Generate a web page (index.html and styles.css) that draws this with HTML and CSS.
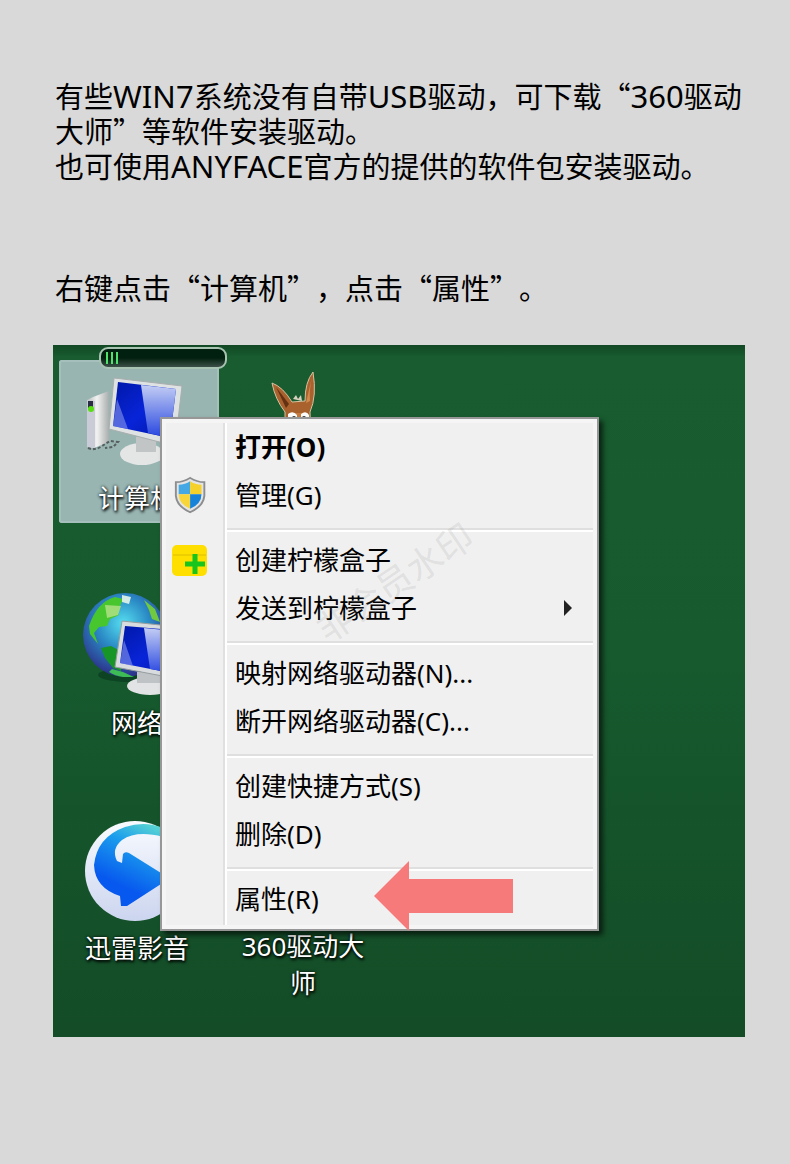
FILE: index.html
```
<!DOCTYPE html>
<html lang="zh-CN">

<head>
    <meta charset="UTF-8">
    <meta name="viewport" content="width=device-width, initial-scale=1.0">
    <title>USB驱动安装说明</title>
    <link rel="stylesheet" href="styles.css">
</head>

<body>
    <main class="page">
        <p class="intro">有些<span class="latin">WIN7</span>系统没有自带<span class="latin">USB</span>驱动，可下载“<span class="latin">360</span>驱动<br>大师”等软件安装驱动。<br>也可使用<span class="latin">ANYFACE</span>官方的提供的软件包安装驱动。</p>
        <p class="step">右键点击“计算机”，点击“属性”。</p>

        <div class="desktop">
            <!-- desktop icons -->
            <div class="icons">
                <div class="icon selected">
                    <svg viewBox="0 0 104 104" aria-hidden="true">
                        <defs>
                            <linearGradient id="screen" x1="0" y1="0" x2="1" y2="1">
                                <stop offset="0" stop-color="#0018a8" />
                                <stop offset=".5" stop-color="#0824d8" />
                                <stop offset="1" stop-color="#0014a0" />
                            </linearGradient>
                            <linearGradient id="glare" x1="0" y1="0" x2="0" y2="1">
                                <stop offset="0" stop-color="#c3cdf4" />
                                <stop offset="1" stop-color="#2544e0" />
                            </linearGradient>
                            <linearGradient id="metal" x1="0" y1="0" x2="1" y2="0">
                                <stop offset="0" stop-color="#b8bcbc" />
                                <stop offset=".45" stop-color="#f2f2f2" />
                                <stop offset="1" stop-color="#a9adad" />
                            </linearGradient>
                        </defs>
                        <path d="M2 28 8 25 24 19V70L9 76 2 75Z" fill="url(#metal)" />
                        <path d="M2 28 10 29V76L2 75Z" fill="#c9cbd6" />
                        <path d="M3 29h5v7H3z" fill="#2b2d42" />
                        <circle cx="6" cy="37" r="3" fill="#57df12" />
                        <path d="M3 76q7 3 14-2l8-5 8 1-5 5-8 1" fill="none" stroke="#555f5f" stroke-width="2" stroke-dasharray="3 2" />
                        <ellipse cx="57" cy="82" rx="22" ry="11" fill="#e4e5e5" />
                        <path d="M51 65h20v15H51z" fill="#c2c5c5" />
                        <path d="M29 6 97 14 90 74 24 57Z" fill="#dfe2e2" stroke="#a9aeae" />
                        <path d="M33 10 91 17 85 66 28 54Z" fill="url(#screen)" />
                        <path d="M56 13 91 17 85 66 63 61Z" fill="url(#glare)" />
                        <path d="M32 27 43 57 28 54Z" fill="#8796ea" opacity=".6" />
                    </svg>
                    <span class="name">计算机</span>
                </div>

                <div class="icon donkey">
                    <svg viewBox="0 0 104 104" aria-hidden="true">
                        <path d="M21 11 Q32 15 41 30 L54 29 Q54 10 62 0 Q66 24 59 40 L60 66H34V40Q24 27 21 11Z" fill="#a9622e" stroke="#d5c3a2" />
                        <path d="M25 15 38 32 35 36Z" fill="#653113" />
                        <path d="M61 5 Q58 18 59 29L55 31Z" fill="#d18a4d" />
                        <path d="M42 27l3-4 2 4 3-4 1 6z" fill="#d8d0bd" />
                        <path d="M38 41h19v22H38z" fill="#c77a3d" />
                        <path d="M37 42q5-4 9 1v11h-9zM50 42q5-4 8 1v11h-8z" fill="#fff" />
                        <circle cx="43" cy="46" r="2" fill="#333" />
                        <circle cx="53" cy="46" r="2" fill="#333" />
                    </svg>
                </div>

                <div class="icon network">
                    <svg viewBox="0 0 104 104" aria-hidden="true">
                        <defs>
                            <radialGradient id="globe" cx=".48" cy=".36" r=".62">
                                <stop offset="0" stop-color="#55def0" />
                                <stop offset=".5" stop-color="#2a89c4" />
                                <stop offset="1" stop-color="#2c348c" />
                            </radialGradient>
                        </defs>
                        <ellipse cx="45" cy="78" rx="32" ry="7" fill="#07351c" opacity=".6" />
                        <circle cx="40" cy="38" r="42" fill="url(#globe)" />
                        <path d="M4 29Q12 5 30 0L38 2 35 9 29 10 34 18 25 22 22 29 14 30 9 36 13 47 5 37Z" fill="#47c62d" />
                        <path d="M20 8 36 9 33 18 22 21Z" fill="#a0dc78" />
                        <path d="M37-2 46 0 44 7 37 5Z" fill="#d3ebe5" />
                        <path d="M16 51 26 49 37 55 36 74 28 71 20 61Z" fill="#179527" />
                        <path d="M59 3 70 12 75 25 67 22 64 13Z" fill="#70c93e" />
                        <path d="M27 72 38 75 49 80H38Q30 79 24 75Z" fill="#3dbb55" />
                        <ellipse cx="65" cy="89" rx="23" ry="9" fill="#e2e3e4" />
                        <path d="M52 75h24v11H52z" fill="#bfc3c5" />
                        <path d="M37 24 104 31V84L30 70Z" fill="#d9dcde" stroke="#969e9f" />
                        <path d="M40 29 100 34 96 78 35 66Z" fill="url(#screen)" />
                        <path d="M59 31 100 35V78L65 72Z" fill="url(#glare)" />
                        <path d="M39 43 48 69 35 66Z" fill="#8796ea" opacity=".6" />
                    </svg>
                    <span class="name">网络</span>
                </div>

                <div class="icon player">
                    <svg viewBox="0 0 104 104" aria-hidden="true">
                        <defs>
                            <linearGradient id="disc" x1="0" y1="0" x2="0" y2="1">
                                <stop offset="0" stop-color="#f8fbff" />
                                <stop offset="1" stop-color="#ccd5ef" />
                            </linearGradient>
                            <linearGradient id="swirl" x1=".8" y1="0" x2=".3" y2="1">
                                <stop offset="0" stop-color="#65e0cd" />
                                <stop offset=".35" stop-color="#1b9ded" />
                                <stop offset=".8" stop-color="#0758ee" />
                            </linearGradient>
                        </defs>
                        <circle cx="50" cy="49" r="50" fill="url(#disc)" />
                        <path d="M96 17Q70-5 40 5Q12 15 9 43Q10 66 35 74L36 84H42L76 62V51L44 31Q40 29 38 32L37 41L32 39Q26 27 37 18Q52 8 78 15Z" fill="url(#swirl)" />
                    </svg>
                    <span class="name">迅雷影音</span>
                </div>

                <div class="icon driver">
                    <span class="name">360驱动大师</span>
                </div>
            </div>

            <!-- floating monitor bar -->
            <div class="pill"><i></i><i></i><i></i></div>

            <!-- context menu -->
            <div class="menu">
                <button type="button" class="item default"><span class="text">打开(O)</span></button>
                <button type="button" class="item">
                    <svg class="glyph" viewBox="0 0 36 42" aria-hidden="true">
                        <g transform="translate(1 3) scale(.95 .86)">
                            <path d="M18 1Q25 6 33 6V22Q32 34 18 41Q4 34 3 22V6Q11 6 18 1Z" fill="#e4e4e4" stroke="#8b8d8f" stroke-width="2" />
                            <path d="M18 5V20H6V9Q13 9 18 5Z" fill="#43a8e4" />
                            <path d="M18 5Q23 9 30 9V20H18Z" fill="#f5d129" />
                            <path d="M6 20H18V37Q6 31 6 20Z" fill="#f8d63a" />
                            <path d="M18 20H30Q30 31 18 37Z" fill="#1682d8" />
                        </g>
                    </svg>
                    <span class="text">管理(G)</span>
                </button>
                <hr>
                <button type="button" class="item">
                    <svg class="glyph" viewBox="0 0 36 42" aria-hidden="true">
                        <rect x="0" y="6" width="35" height="31" rx="5" fill="#ffdf00" />
                        <path d="M1 16h33" stroke="#dcc000" />
                        <path d="M13 25h20M23 15v20" stroke="#17c51d" stroke-width="5" />
                    </svg>
                    <span class="text">创建柠檬盒子</span>
                </button>
                <button type="button" class="item">
                    <span class="text">发送到柠檬盒子</span>
                    <svg class="more" viewBox="0 0 10 16" aria-hidden="true"><path d="M1 0 9 8 1 16Z" fill="#222" /></svg>
                </button>
                <hr>
                <button type="button" class="item"><span class="text">映射网络驱动器(N)...</span></button>
                <button type="button" class="item"><span class="text">断开网络驱动器(C)...</span></button>
                <hr>
                <button type="button" class="item"><span class="text">创建快捷方式(S)</span></button>
                <button type="button" class="item"><span class="text">删除(D)</span></button>
                <hr>
                <button type="button" class="item"><span class="text">属性(R)</span></button>

                <svg class="pointer" viewBox="0 0 139 70" aria-hidden="true"><path d="M0 35 35 0V18H139V52H35V70Z" fill="#f67a7a" /></svg>
            </div>

            <span class="watermark">非会员水印</span>
        </div>
    </main>
</body>

</html>
```
FILE: styles.css
```
* {
    box-sizing: border-box;
}

body {
    margin: 0;
    background-color: #d9d9d9;
    color: #000;
    font-family: "Noto Sans", "Noto Sans CJK SC", sans-serif;
    text-spacing-trim: space-all;
}

.page {
    padding: 78px 45px 128px 53px;
}

.intro,
.step {
    margin: 0 0 0 2px;
    font-family: "Noto Sans CJK SC", sans-serif;
    font-size: 29px;
    line-height: 35px;
    white-space: nowrap;
}

.step {
    margin-top: 87px;
    margin-bottom: 40px;
}

/* Latin letters run a little larger than the Chinese text */
.latin {
    font-family: "Noto Sans", sans-serif;
    font-size: 31px;
    line-height: 1;
}

.desktop {
    position: relative;
    aspect-ratio: 1 / 1;
    padding: 15px 6px;
    overflow: hidden;
    background: linear-gradient(#124825, #185c2f 12px, #175a2e 45%, #134c27);
}

.icons {
    display: grid;
    grid-template-columns: 160px 160px;
    grid-auto-rows: 225px;
    column-gap: 6px;
    align-items: start;
}

.icon {
    display: flex;
    flex-direction: column;
    align-items: center;
    padding: 12px 14px 6px 10px;
    border-radius: 3px;
}

.icon svg {
    width: 104px;
    height: 104px;
    margin-bottom: 4px;
    overflow: visible;
}

.selected {
    background-color: #98b5b2;
    box-shadow: inset 0 0 0 2px #a5c0bc;
}

.network {
    grid-row: 2;
}

.player {
    grid-row: 3;
}

.driver {
    grid-area: 3 / 2;
    padding-top: 118px;
}

.name {
    color: #fff;
    font-size: 26px;
    line-height: 37px;
    text-align: center;
    text-shadow: 1px 2px 3px #000, 0 0 3px #000;
}

.pill {
    position: absolute;
    top: 2px;
    left: 46px;
    display: flex;
    gap: 3px;
    width: 128px;
    height: 22px;
    padding: 3px 5px;
    border: 2px solid #a9c3b3;
    border-radius: 9px;
    background: linear-gradient(#02200f 50%, #3d5048);
}

.pill i {
    width: 2px;
    background-color: #4fe36c;
}

.menu {
    position: absolute;
    top: 72px;
    left: 107px;
    width: 439px;
    padding: 4px 4px 6px;
    border: 2px solid #979797;
    background: linear-gradient(90deg, #e0e0e0 2px, #fff 2px) 61px 4px / 4px calc(100% - 8px) no-repeat, #f0f0f0;
    box-shadow: inset 0 0 0 4px #f5f5f5, 4px 4px 5px rgba(0, 0, 0, 0.6);
}

.item {
    display: grid;
    grid-template-columns: 36px 1fr 10px;
    column-gap: 27px;
    align-items: center;
    width: 100%;
    height: 48px;
    padding: 0 20px 0 6px;
    border: none;
    background: none;
    color: #000;
    font-family: inherit;
    font-size: 26px;
    text-align: left;
}

.default {
    font-weight: bold;
}

.glyph {
    width: 36px;
    height: 42px;
}

.text {
    grid-column: 2;
    line-height: 36px;
}

.more {
    width: 10px;
    height: 16px;
}

.menu hr {
    height: 4px;
    margin: 9px 0 4px 61px;
    border: none;
    border-top: 2px solid #dfdfdf;
    background-color: #fff;
}

/* arrow over the last menu item */
.pointer {
    position: absolute;
    right: 84px;
    bottom: -2px;
    width: 139px;
    height: 70px;
}

.watermark {
    position: absolute;
    top: 213px;
    left: 252px;
    color: rgba(120, 120, 120, 0.15);
    font-size: 36px;
    line-height: 50px;
    white-space: nowrap;
    transform: rotate(-34deg);
}
```
